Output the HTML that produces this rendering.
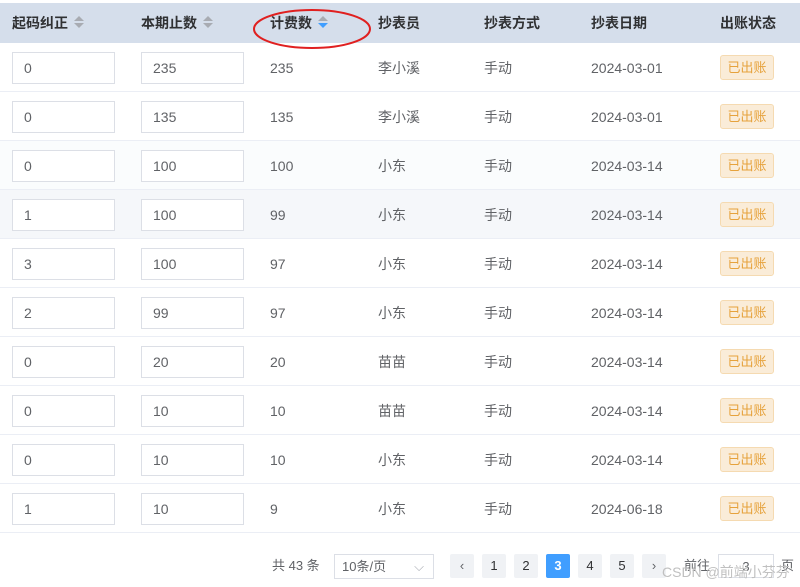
<!DOCTYPE html>
<html><head><meta charset="utf-8"><style>
*{margin:0;padding:0;box-sizing:border-box}
body{width:800px;height:587px;background:#fff;font-family:"Liberation Sans","Noto Sans CJK SC",sans-serif;position:relative;overflow:hidden;color:#606266;font-size:14px}
.hd{position:absolute;left:0;top:3px;width:800px;height:40px;background:#d5deeb}
.th{position:absolute;top:13px;line-height:20px;font-weight:bold;color:#303133;font-size:14px}
.sort{display:inline-block;width:10px;height:14px;position:relative;vertical-align:-2px;margin-left:6px}
.sort:before{content:"";position:absolute;left:0;top:0;border:5px solid transparent;border-top:0;border-bottom:5px solid #a8abb2}
.sort:after{content:"";position:absolute;left:0;top:7px;border:5px solid transparent;border-bottom:0;border-top:5px solid #a8abb2}
.sort.b:after{border-top-color:#409eff}
.row{position:absolute;left:0;width:800px;height:49px;border-bottom:1px solid #ebeef5}
.c{position:absolute;top:9px;line-height:32px}
.in{position:absolute;top:9px;width:103px;height:32px;border:1px solid #dcdfe6;background:#fff;padding-left:11px;line-height:30px}
.tag{position:absolute;left:720px;top:12px;width:54px;height:25px;background:#faecd8;border:1px solid #f5dab1;border-radius:3px;color:#e6a23c;font-size:13px;text-align:center;line-height:23px}
.pg{position:absolute;top:554px;height:24px;font-size:13px;line-height:24px}
.btn{position:absolute;top:554px;width:24px;height:24px;background:#f0f2f5;border-radius:2px;text-align:center;line-height:24px;font-size:13px;color:#303133}
</style></head><body>
<div class="hd"></div>
<div class="th" style="left:12px">起码纠正<span class="sort"></span></div>
<div class="th" style="left:141px">本期止数<span class="sort"></span></div>
<div class="th" style="left:270px">计费数<span class="sort b"></span></div>
<div class="th" style="left:378px">抄表员</div>
<div class="th" style="left:484px">抄表方式</div>
<div class="th" style="left:591px">抄表日期</div>
<div class="th" style="left:720px">出账状态</div>
<div id="rows"></div>
<script>
var d=[["0","235","235","李小溪","2024-03-01"],["0","135","135","李小溪","2024-03-01"],["0","100","100","小东","2024-03-14"],["1","100","99","小东","2024-03-14"],["3","100","97","小东","2024-03-14"],["2","99","97","小东","2024-03-14"],["0","20","20","苗苗","2024-03-14"],["0","10","10","苗苗","2024-03-14"],["0","10","10","小东","2024-03-14"],["1","10","9","小东","2024-06-18"]];
var h="";d.forEach(function(r,i){var bg=i==2?"#fafcfd":i==3?"#f5f7fa":"#fff";
h+='<div class="row" style="top:'+(43+49*i)+'px;background:'+bg+'"><div class="in" style="left:12px">'+r[0]+'</div><div class="in" style="left:141px">'+r[1]+'</div><div class="c" style="left:270px">'+r[2]+'</div><div class="c" style="left:378px">'+r[3]+'</div><div class="c" style="left:484px">手动</div><div class="c" style="left:591px">'+r[4]+'</div><div class="tag">已出账</div></div>';});
document.getElementById("rows").innerHTML=h;
</script>
<svg style="position:absolute;left:250px;top:5px;z-index:5" width="125" height="48"><ellipse cx="62" cy="24" rx="58" ry="19" fill="none" stroke="#e02020" stroke-width="2"/></svg>
<div class="pg" style="left:272px">共 43 条</div>
<div class="pg" style="left:334px;width:100px;border:1px solid #dcdfe6;height:25px;padding-left:7px;line-height:23px">10条/页<span style="position:absolute;right:9px;color:#a8abb2">⌵</span></div>
<div class="btn" style="left:450px;color:#606266">‹</div>
<div class="btn" style="left:482px">1</div>
<div class="btn" style="left:514px">2</div>
<div class="btn" style="left:546px;background:#409eff;color:#fff;font-weight:bold">3</div>
<div class="btn" style="left:578px">4</div>
<div class="btn" style="left:610px">5</div>
<div class="btn" style="left:642px;color:#606266">›</div>
<div class="pg" style="left:684px">前往</div>
<div class="pg" style="left:718px;width:56px;border:1px solid #dcdfe6;text-align:center">3</div>
<div class="pg" style="left:781px">页</div>
<div class="pg" style="left:662px;top:560px;color:#c0c0c0;font-size:14px">CSDN @前端小芬芬</div>
</body></html>
